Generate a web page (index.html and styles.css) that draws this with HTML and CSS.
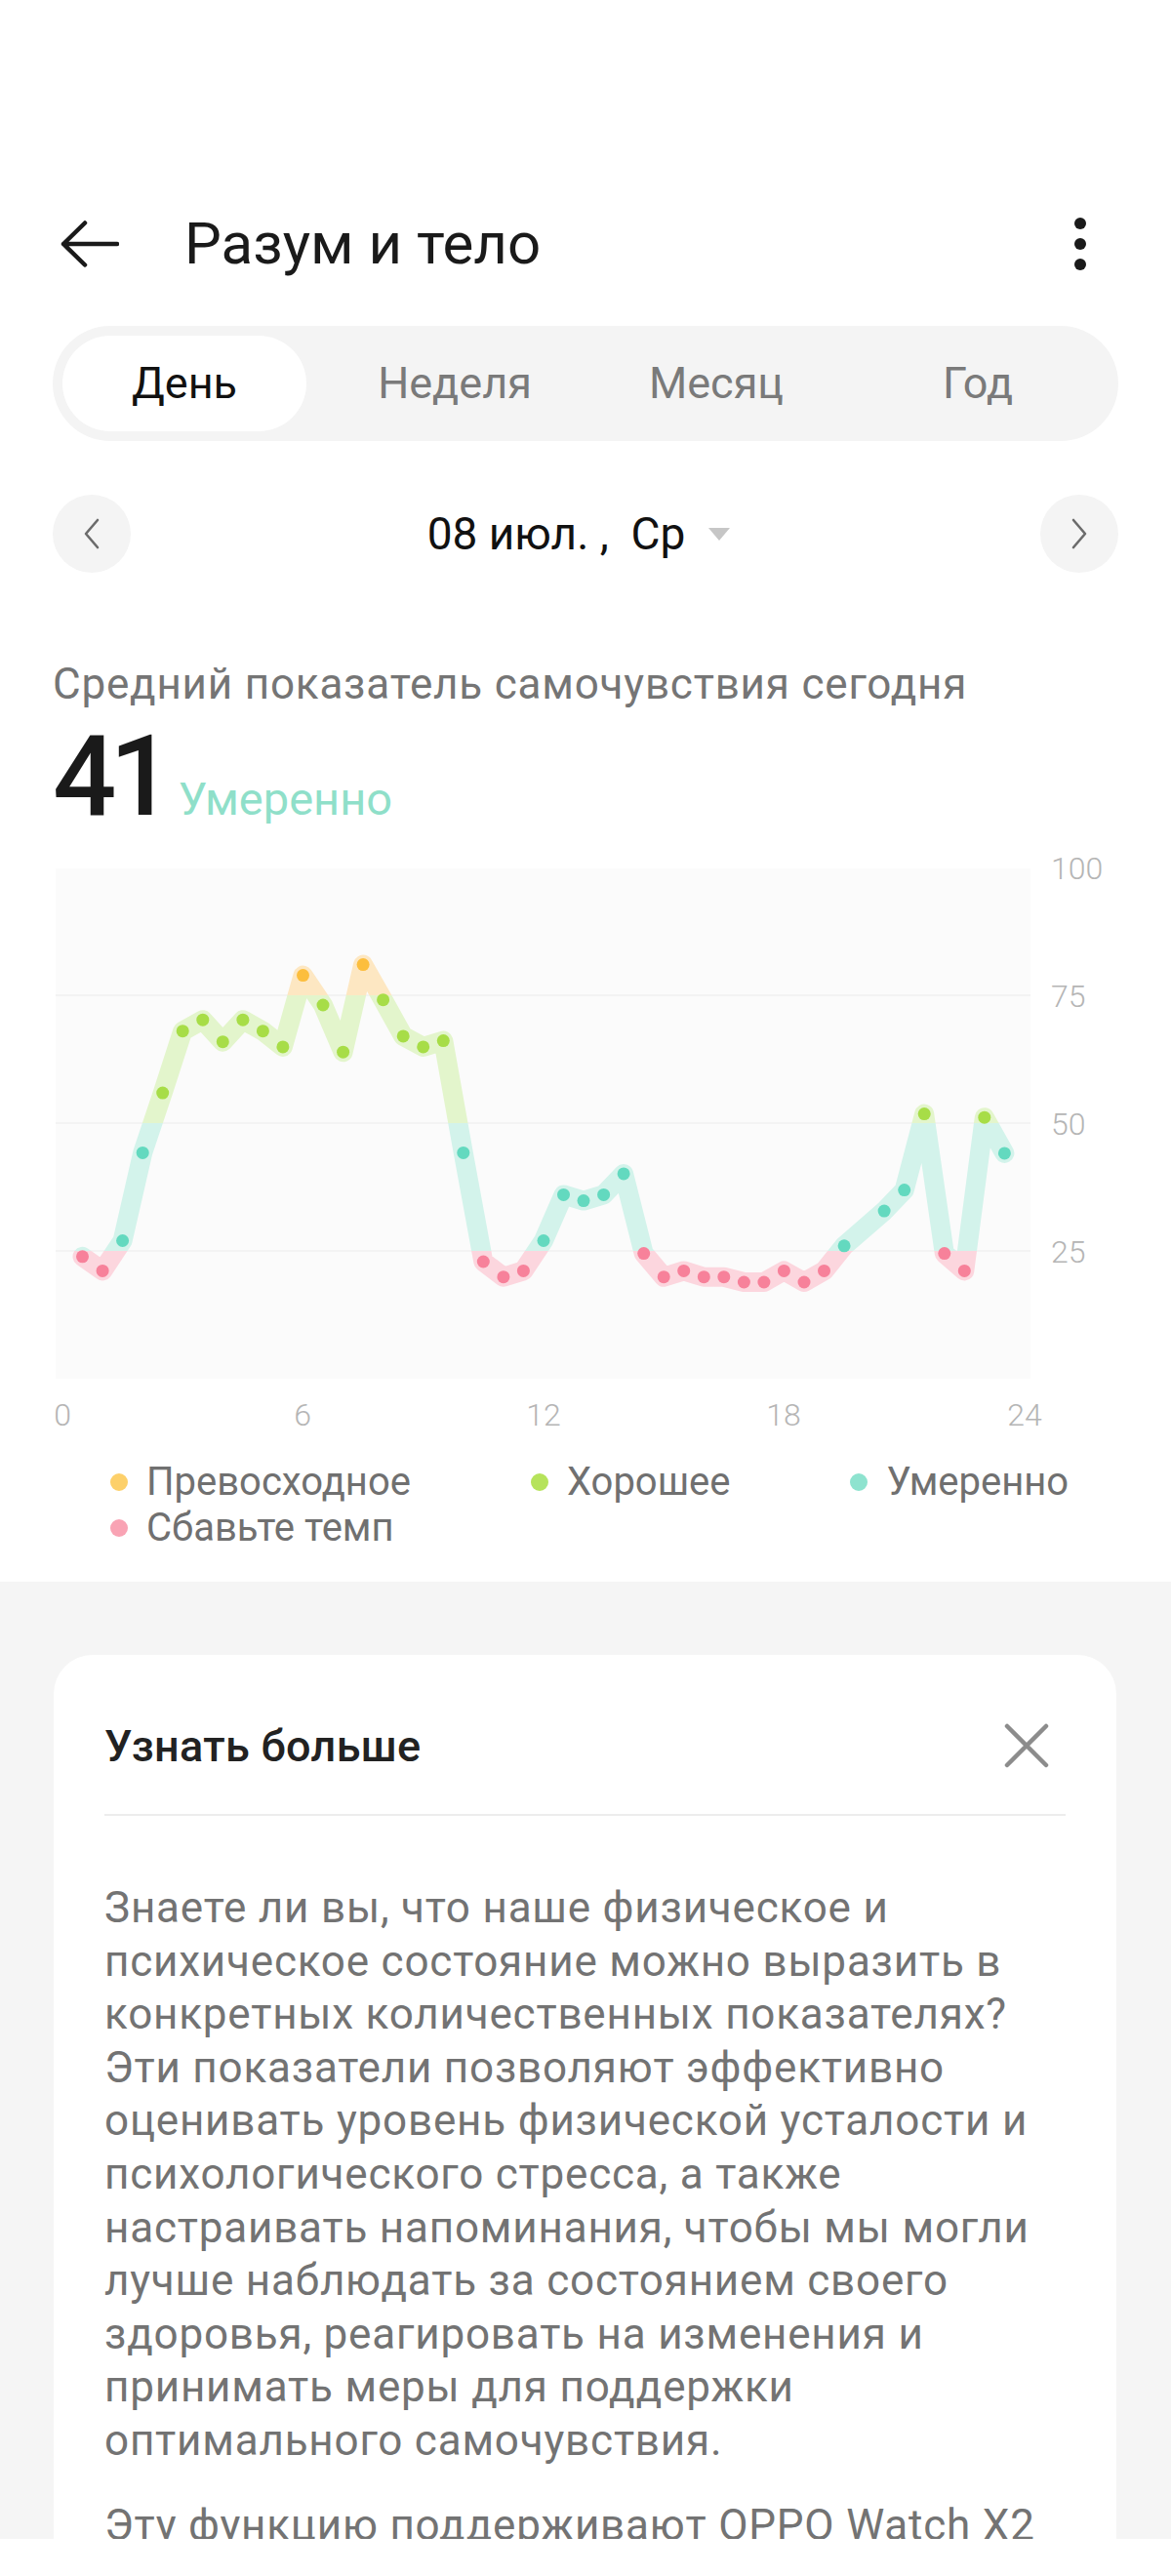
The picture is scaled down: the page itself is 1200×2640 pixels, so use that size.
FILE: index.html
```html
<!DOCTYPE html>
<html lang="ru">
<head>
<meta charset="UTF-8" />
<meta name="viewport" content="width=device-width, initial-scale=1" />
<title>Разум и тело</title>
<link rel="stylesheet" href="styles.css">
</head>
<body>

<header class="topbar">
  <a class="back" href="#">
    <svg width="60" height="48" viewBox="0 0 60 48"><path d="M3 24H58M25 2.5L3 24l22 21.5" fill="none" stroke="#1a1a1a" stroke-width="4.5" stroke-linecap="round" stroke-linejoin="round"/></svg>
  </a>
  <h1>Разум и тело</h1>
  <a class="more" href="#">
    <svg width="14" height="56" viewBox="0 0 14 56"><circle cx="7" cy="7" r="6"/><circle cx="7" cy="28" r="6"/><circle cx="7" cy="49" r="6"/></svg>
  </a>
</header>

<main class="summary">
  <div class="tabs">
    <span class="tab active">День</span>
    <span class="tab">Неделя</span>
    <span class="tab">Месяц</span>
    <span class="tab">Год</span>
  </div>

  <div class="date-row">
    <button class="nav-btn">
      <svg width="18" height="32" viewBox="0 0 18 32"><path d="M15 2L3 16l12 14" fill="none" stroke="#6b6b6b" stroke-width="2.6" stroke-linecap="round" stroke-linejoin="round"/></svg>
    </button>
    <div class="date">08 июл. ,&nbsp; Ср <span class="caret"></span></div>
    <button class="nav-btn">
      <svg width="18" height="32" viewBox="0 0 18 32"><path d="M3 2l12 14L3 30" fill="none" stroke="#6b6b6b" stroke-width="2.6" stroke-linecap="round" stroke-linejoin="round"/></svg>
    </button>
  </div>

  <p class="subtitle">Средний показатель самочувствия сегодня</p>
  <div class="score">
    <span class="score-value">41</span>
    <span class="score-label">Умеренно</span>
  </div>

  <svg class="chart" width="1092" height="615" viewBox="0 0 1092 615">
    <defs>
      <linearGradient id="band" gradientUnits="userSpaceOnUse" x1="0" y1="0" x2="0" y2="553">
        <stop offset="0" stop-color="#fde7c2"/>
        <stop offset="0.2893" stop-color="#fde7c2"/>
        <stop offset="0.2893" stop-color="#e3f5cc"/>
        <stop offset="0.5262" stop-color="#e3f5cc"/>
        <stop offset="0.5262" stop-color="#d3f3eb"/>
        <stop offset="0.7631" stop-color="#d3f3eb"/>
        <stop offset="0.7631" stop-color="#fcd6de"/>
        <stop offset="1" stop-color="#fcd6de"/>
      </linearGradient>
    </defs>
    <rect class="plot" x="3" y="30" width="999" height="523"/>
    <g class="grid">
      <line x1="3" x2="1002" y1="160" y2="160"/>
      <line x1="3" x2="1002" y1="291" y2="291"/>
      <line x1="3" x2="1002" y1="422" y2="422"/>
    </g>
    <polyline id="score-line" class="score-line" points=""/>
    <g id="score-dots"></g>
    <g class="axis axis-y">
      <text x="1023" y="41">100</text>
      <text x="1023" y="172">75</text>
      <text x="1023" y="303">50</text>
      <text x="1023" y="434">25</text>
    </g>
    <g class="axis axis-x">
      <text x="10" y="601">0</text>
      <text x="256" y="601">6</text>
      <text x="503" y="601">12</text>
      <text x="749" y="601">18</text>
      <text x="996" y="601">24</text>
    </g>
  </svg>

  <ul class="legend">
    <li><span class="dot great"></span>Превосходное</li>
    <li><span class="dot good"></span>Хорошее</li>
    <li><span class="dot fair"></span>Умеренно</li>
    <li><span class="dot slow"></span>Сбавьте темп</li>
  </ul>
</main>

<section class="info">
  <div class="card">
    <div class="card-head">
      <h2>Узнать больше</h2>
      <button class="close">
        <svg width="48" height="48" viewBox="0 0 48 48"><path d="M4 4L44 44M44 4L4 44" stroke="#8c8c8c" stroke-width="4.5" stroke-linecap="round"/></svg>
      </button>
    </div>
    <p>Знаете ли вы, что наше физическое и<br>
      психическое состояние можно выразить в<br>
      конкретных количественных показателях?<br>
      Эти показатели позволяют эффективно<br>
      оценивать уровень физической усталости и<br>
      психологического стресса, а также<br>
      настраивать напоминания, чтобы мы могли<br>
      лучше наблюдать за состоянием своего<br>
      здоровья, реагировать на изменения и<br>
      принимать меры для поддержки<br>
      оптимального самочувствия.</p>
    <p>Эту функцию поддерживают OPPO Watch X2</p>
  </div>
</section>

<div class="gesture-bar"></div>

<script>
  // оценка каждые 30 минут, null = нет данных
  const scores = [
    23.9, 21.1, 27.0, 44.2, 55.9, 68.0, 70.2, 65.9, 70.2, 68.0,
    64.9, 78.9, 73.1, 63.9, 81.0, 74.1, 67.0, 64.9, 66.1, 44.2,
    22.9, 19.9, 21.1, 27.0, 36.0, 34.8, 36.0, 40.1, 24.5, 19.9,
    21.1, 19.9, 19.9, 18.9, 18.9, 21.1, 18.9, 21.1, 26.0, null,
    32.8, 36.9, 51.8, 24.5, 21.1, 51.1, 44.1
  ];

  const svgNS = 'http://www.w3.org/2000/svg';
  const xOf = hour => 10 + hour * 41.08;
  const yOf = value => 553 - value * 5.24;

  function level(value) {
    if (value >= 75) return 'great';
    if (value >= 50) return 'good';
    if (value >= 25) return 'fair';
    return 'slow';
  }

  const dotsGroup = document.getElementById('score-dots');
  const points = [];

  scores.forEach((value, index) => {
    if (value === null) return;
    const cx = xOf((index + 1) / 2).toFixed(1);
    const cy = yOf(value).toFixed(1);
    points.push(cx + ',' + cy);

    const dot = document.createElementNS(svgNS, 'circle');
    dot.setAttribute('cx', cx);
    dot.setAttribute('cy', cy);
    dot.setAttribute('r', 6.5);
    dot.setAttribute('class', 'point ' + level(value));
    dotsGroup.appendChild(dot);
  });

  document.getElementById('score-line').setAttribute('points', points.join(' '));
</script>

</body>
</html>
```

FILE: styles.css
```css
* { box-sizing: border-box; }
body { margin: 0; font-family: Roboto, "Noto Sans", Arial, sans-serif; background: #fff; color: #1a1a1a; }

.topbar { display: flex; align-items: center; height: 120px; margin-top: 190px; padding: 0 86px 0 62px; }
.topbar h1 { flex: 1; margin: 0 0 0 67px; font-size: 60px; font-weight: 400; line-height: 1; color: #1a1a1a; }
.back, .more { display: flex; }
.more svg { fill: #1a1a1a; }

.summary { padding: 24px 54px 32px; }

.tabs { display: grid; grid-template-columns: repeat(4, 1fr); height: 118px; padding: 10px; background: #f4f4f4; border-radius: 59px; }
.tab { line-height: 98px; text-align: center; font-size: 45px; color: #7a7a7a; border-radius: 49px; }
.tab.active { background: #fff; color: #111; margin-right: 18px; }

.date-row { display: flex; align-items: center; justify-content: space-between; margin-top: 55px; }
.nav-btn { display: flex; align-items: center; justify-content: center; width: 80px; height: 80px; padding: 0; border: none; border-radius: 50%; background: #f4f4f4; }
.date { display: flex; align-items: center; margin-right: 14px; font-size: 46px; color: #111; }
.caret { width: 0; height: 0; margin-left: 24px; border-left: 11px solid transparent; border-right: 11px solid transparent; border-top: 13px solid #c6c6c6; }

.subtitle { margin: 84px 0 0; font-size: 44px; line-height: 60px; letter-spacing: 0.8px; color: #757575; }
.score { display: flex; align-items: baseline; margin-top: 5px; }
.score-value { font-size: 115px; line-height: 120px; font-weight: 500; letter-spacing: -7px; color: #1a1a1a; }
.score-label { margin-left: 12px; font-size: 47px; color: #8fdfc9; }

.chart { display: block; margin-top: 4px; }
.chart .plot { fill: #fbfbfb; }
.chart .grid line { stroke: #f3f3f3; stroke-width: 2; }
.score-line { fill: none; stroke: url(#band); stroke-width: 20; stroke-linejoin: round; stroke-linecap: round; }
.point.great { fill: #fcbe3d; }
.point.good { fill: #a7dd47; }
.point.fair { fill: #63d9bf; }
.point.slow { fill: #f7819a; }
.axis text { font-size: 32px; font-weight: 300; fill: #b5b5b5; }
.axis-x text { text-anchor: middle; }

.legend { display: flex; flex-wrap: wrap; gap: 0 123px; margin: 20px 0 0; padding: 0 0 0 59px; list-style: none; }
.legend li { display: flex; align-items: center; font-size: 40px; line-height: 47px; color: #707070; }
.dot { width: 18px; height: 18px; margin-right: 19px; border-radius: 50%; }
.dot.great { background: #fdd06a; }
.dot.good { background: #b6e35b; }
.dot.fair { background: #8ee3cf; }
.dot.slow { background: #f9a3b4; }

.info { background: #f5f5f5; padding: 75px 56px 60px 55px; }
.card { background: #fff; border-radius: 40px; padding: 48px 52px 40px; }
.card-head { display: flex; align-items: center; justify-content: space-between; height: 117px; padding-bottom: 25px; border-bottom: 2px solid #ededed; }
.card-head h2 { margin: 0; font-size: 45px; font-weight: 500; letter-spacing: 0.3px; color: #222; }
.close { display: flex; margin-right: 16px; padding: 0; border: none; background: none; }
.card p { margin: 32px 0 0; font-size: 44px; line-height: 54.6px; letter-spacing: 0.8px; color: #737373; }
.card-head + p { margin-top: 67px; }

.gesture-bar { position: fixed; left: 0; right: 0; bottom: 0; height: 38px; background: #fff; }
```
